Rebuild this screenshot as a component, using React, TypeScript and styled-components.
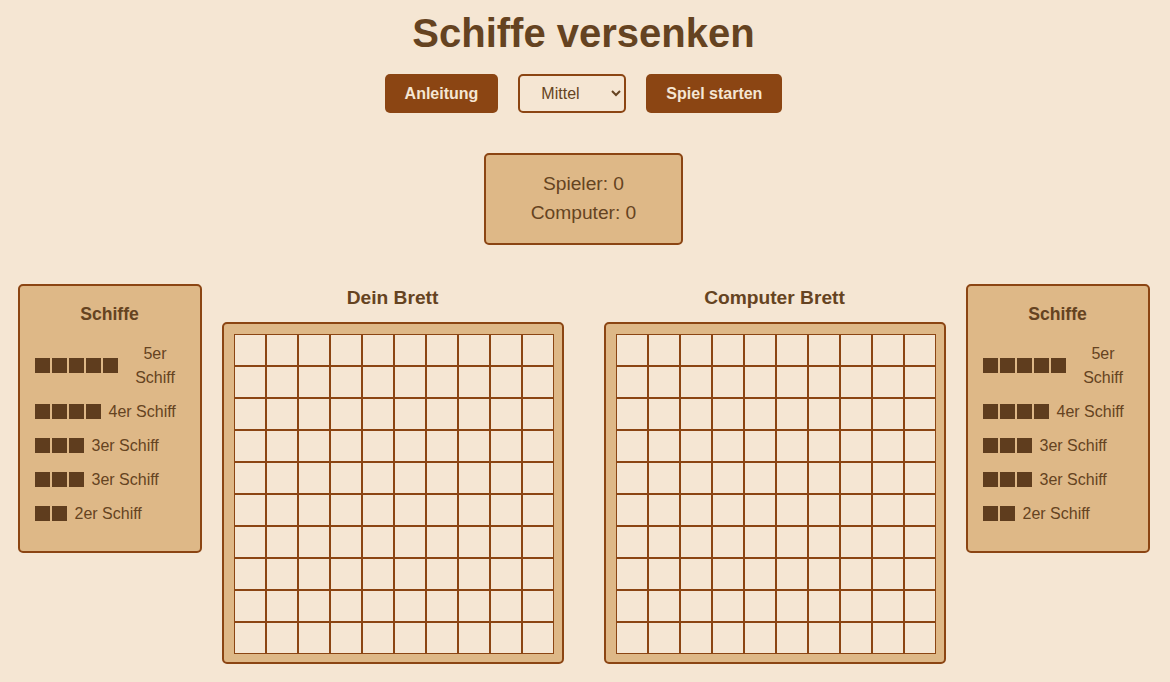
import React from 'react';
import styled, { createGlobalStyle } from 'styled-components';

const GlobalStyle = createGlobalStyle`
  body {
    margin: 0;
    background-color: #f5e6d3;
    color: #654321;
    font-family: 'Liberation Sans', Arial, sans-serif;
    line-height: 1.5;
  }
`;

const Page = styled.div`
  display: flex;
  flex-direction: column;
  align-items: center;
  padding: 3px 3px 0 0;
`;

const Title = styled.h1`
  margin: 0 0 11px;
  font-size: 40px;
  line-height: 60px;
  font-weight: 700;
  color: #654321;
`;

const Controls = styled.div`
  display: flex;
  align-items: center;
  gap: 20px;
  margin-bottom: 40px;
`;

const ActionButton = styled.button`
  background-color: #8b4513;
  color: #f5e6d3;
  border: none;
  border-radius: 5px;
  padding: 10px 20px;
  font-family: inherit;
  font-size: 16px;
  font-weight: 700;
  line-height: 19px;
  cursor: pointer;
`;

const Difficulty = styled.select`
  box-sizing: border-box;
  width: 108px;
  height: 39px;
  padding: 0 4px 0 17px;
  background-color: #f5e6d3;
  color: #654321;
  border: 2px solid #8b4513;
  border-radius: 5px;
  font-family: inherit;
  font-size: 16px;
`;

const Score = styled.div`
  box-sizing: border-box;
  width: 199px;
  padding: 15px;
  background-color: #deb887;
  border: 2px solid #8b4513;
  border-radius: 5px;
  font-size: 19.2px;
  line-height: 28.8px;
  text-align: center;
  margin-bottom: 39px;
`;

const GameArea = styled.div`
  display: flex;
  align-items: flex-start;
  justify-content: center;
  gap: 20px;
`;

const Boards = styled.div`
  display: flex;
  gap: 40px;
`;

const Panel = styled.div`
  box-sizing: border-box;
  width: 184px;
  padding: 15px;
  background-color: #deb887;
  border: 2px solid #8b4513;
  border-radius: 5px;
`;

const PanelTitle = styled.h3`
  margin: 0 0 15px;
  font-size: 17.6px;
  font-weight: 700;
  text-align: center;
`;

const ShipRow = styled.div`
  display: flex;
  align-items: center;
  margin-bottom: 10px;
`;

const ShipCells = styled.div`
  display: flex;
  gap: 2px;
  flex-shrink: 0;
`;

const ShipCell = styled.div`
  width: 15px;
  height: 15px;
  background-color: #5f3d1e;
`;

const ShipName = styled.span`
  margin-left: 8px;
  font-size: 16px;
  line-height: 24px;
  text-align: center;
`;

const BoardColumn = styled.div`
  display: flex;
  flex-direction: column;
  align-items: center;
`;

const BoardTitle = styled.h2`
  margin: 0 0 10px;
  font-size: 19.2px;
  line-height: 28.8px;
  font-weight: 700;
`;

const Board = styled.div`
  box-sizing: border-box;
  width: 342px;
  height: 342px;
  padding: 10px;
  background-color: #deb887;
  border: 2px solid #8b4513;
  border-radius: 5px;
`;

const Grid = styled.div`
  width: 320px;
  height: 320px;
  display: grid;
  grid-template-columns: repeat(10, 32px);
  grid-template-rows: repeat(10, 32px);
`;

const Cell = styled.div`
  box-sizing: border-box;
  background-color: #f5e6d3;
  border: 1px solid #8b4513;
`;

const ships = [5, 4, 3, 3, 2];

const ShipPanel: React.FC = () => (
  <Panel>
    <PanelTitle>Schiffe</PanelTitle>
    {ships.map((size, i) => (
      <ShipRow key={i}>
        <ShipCells>
          {Array.from({ length: size }).map((_, j) => (
            <ShipCell key={j} />
          ))}
        </ShipCells>
        <ShipName>{size}er Schiff</ShipName>
      </ShipRow>
    ))}
  </Panel>
);

const GameBoard: React.FC<{ title: string }> = ({ title }) => (
  <BoardColumn>
    <BoardTitle>{title}</BoardTitle>
    <Board>
      <Grid>
        {Array.from({ length: 100 }).map((_, i) => (
          <Cell key={i} />
        ))}
      </Grid>
    </Board>
  </BoardColumn>
);

const App: React.FC = () => {
  return (
    <>
      <GlobalStyle />
      <Page>
        <Title>Schiffe versenken</Title>
        <Controls>
          <ActionButton>Anleitung</ActionButton>
          <Difficulty defaultValue="mittel">
            <option value="leicht">Leicht</option>
            <option value="mittel">Mittel</option>
            <option value="schwer">Schwer</option>
          </Difficulty>
          <ActionButton>Spiel starten</ActionButton>
        </Controls>
        <Score>
          <div>Spieler: 0</div>
          <div>Computer: 0</div>
        </Score>
        <GameArea>
          <ShipPanel />
          <Boards>
            <GameBoard title="Dein Brett" />
            <GameBoard title="Computer Brett" />
          </Boards>
          <ShipPanel />
        </GameArea>
      </Page>
    </>
  );
};

export default App;
